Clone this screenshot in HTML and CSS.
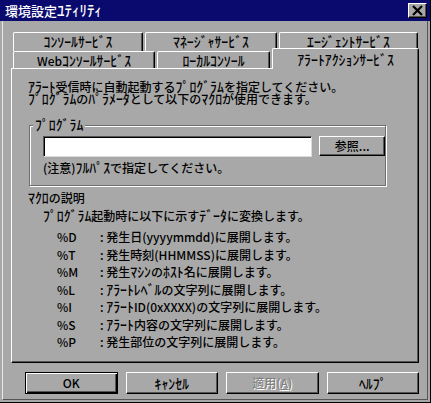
FILE: index.html
```html
<!DOCTYPE html>
<html lang="ja">
<head>
<meta charset="utf-8">
<link rel="stylesheet" href="styles.css">
</head>
<body>
<div class="window">
  <div class="titlebar">
    <span class="title">環境設定<span class="hk">ﾕﾃｨﾘﾃｨ</span></span>
    <span class="close"><svg width="13" height="11" viewBox="0 0 13 11"><path d="M2 1 L11 10 M11 1 L2 10" stroke="#000" stroke-width="2.2" fill="none"/></svg></span>
  </div>
  <div class="body">
    <div class="tabs">
      <div class="tabrow back">
        <div class="tab t1"><span class="hk">ｺﾝｿｰﾙｻｰﾋﾞｽ</span></div>
        <div class="tab t2"><span class="hk">ﾏﾈｰｼﾞｬｻｰﾋﾞｽ</span></div>
        <div class="tab t3"><span class="hk">ｴｰｼﾞｪﾝﾄｻｰﾋﾞｽ</span></div>
      </div>
      <div class="tabrow front">
        <div class="tab t4">Web<span class="hk">ｺﾝｿｰﾙｻｰﾋﾞｽ</span></div>
        <div class="tab t5"><span class="hk">ﾛｰｶﾙｺﾝｿｰﾙ</span></div>
        <div class="tab t6 active"><span class="hk">ｱﾗｰﾄｱｸｼｮﾝｻｰﾋﾞｽ</span></div>
      </div>
    </div>
    <div class="panel">
      <p class="intro"><span class="hk">ｱﾗｰﾄ</span>受信時に自動起動する<span class="hk">ﾌﾟﾛｸﾞﾗﾑ</span>を指定してください。<br><span class="hk">ﾌﾟﾛｸﾞﾗﾑ</span>の<span class="hk">ﾊﾟﾗﾒｰﾀ</span>として以下の<span class="hk">ﾏｸﾛ</span>が使用できます。</p>
      <fieldset class="group">
        <legend><span class="hk">ﾌﾟﾛｸﾞﾗﾑ</span></legend>
        <div class="pathrow">
          <input class="path" type="text">
          <button class="btn browse">参照...</button>
        </div>
        <p class="note">(注意)<span class="hk">ﾌﾙﾊﾟｽ</span>で指定してください。</p>
      </fieldset>
      <p class="head"><span class="hk">ﾏｸﾛ</span>の説明</p>
      <p class="sub"><span class="hk">ﾌﾟﾛｸﾞﾗﾑ</span>起動時に以下に示す<span class="hk">ﾃﾞｰﾀ</span>に変換します。</p>
      <dl class="macros">
        <div class="mrow"><dt>%D</dt><dd>: 発生日(yyyymmdd)に展開します。</dd></div>
        <div class="mrow"><dt>%T</dt><dd>: 発生時刻(HHMMSS)に展開します。</dd></div>
        <div class="mrow"><dt>%M</dt><dd>: 発生<span class="hk">ﾏｼﾝ</span>の<span class="hk">ﾎｽﾄ</span>名に展開します。</dd></div>
        <div class="mrow"><dt>%L</dt><dd>: <span class="hk">ｱﾗｰﾄﾚﾍﾞﾙ</span>の文字列に展開します。</dd></div>
        <div class="mrow"><dt>%I</dt><dd>: <span class="hk">ｱﾗｰﾄ</span>ID(0xXXXX)の文字列に展開します。</dd></div>
        <div class="mrow"><dt>%S</dt><dd>: <span class="hk">ｱﾗｰﾄ</span>内容の文字列に展開します。</dd></div>
        <div class="mrow"><dt>%P</dt><dd>: 発生部位の文字列に展開します。</dd></div>
      </dl>
    </div>
    <div class="buttons">
      <button class="btn big default">OK</button>
      <button class="btn big"><span class="hk">ｷｬﾝｾﾙ</span></button>
      <button class="btn big disabled">適用(<u>A</u>)</button>
      <button class="btn big"><span class="hk">ﾍﾙﾌﾟ</span></button>
    </div>
  </div>
</div>
</body>
</html>
```
FILE: styles.css
```css
* { box-sizing: border-box; }
html, body {
  margin: 0;
  padding: 0;
  background: #a8a8a8;
}
body {
  font-family: "Noto Sans CJK JP", "Noto Sans Mono CJK JP", sans-serif;
  font-size: 12px;
  font-weight: 500;
  line-height: 12px;
  color: #000;
}
p { margin: 0; }
.hk {
  font-size: 1.15em;
  line-height: 1px;
}
.window {
  width: 431px;
  height: 403px;
  display: flex;
  flex-direction: column;
  background: #a8a8a8;
  border-right: 1px solid #000;
  border-bottom: 1px solid #000;
}
.titlebar {
  height: 21px;
  flex: none;
  background: #0a0a6e;
  display: flex;
  align-items: center;
  justify-content: space-between;
  padding: 0 3px 0 5px;
}
.title {
  color: #fff;
  font-size: 13px;
  line-height: 13px;
}
.close {
  width: 19px;
  height: 15px;
  background: #a8a8a8;
  border-top: 1px solid #fff;
  border-left: 1px solid #fff;
  border-right: 1px solid #000;
  border-bottom: 1px solid #000;
  box-shadow: inset -1px -1px 0 #555;
  display: flex;
  align-items: center;
  justify-content: center;
}
.body {
  flex: 1;
  margin: 0 2px 2px 2px;
  border-left: 1px solid #e8e8e8;
  border-right: 1px solid #555;
  border-bottom: 1px solid #555;
  padding: 11px 8px 0 8px;
}
.tabs { padding-left: 2px; }
.tabrow {
  display: flex;
  gap: 2px;
}
.tabrow.back { height: 19px; }
.tabrow.front {
  height: 20px;
  margin-top: -3px;
  align-items: flex-start;
}
.tab {
  height: 19px;
  background: #a8a8a8;
  border-top: 1px solid #fff;
  border-left: 1px solid #fff;
  border-right: 1px solid #000;
  box-shadow: inset -1px 0 0 #555;
  border-top-left-radius: 2px;
  border-top-right-radius: 2px;
  display: flex;
  align-items: center;
  justify-content: center;
  padding-bottom: 1px;
}
.t1 { width: 130px; }
.t2 { width: 132px; }
.t3 { width: 139px; }
.tabrow.front .tab { margin-top: 3px; height: 17px; padding-bottom: 0; padding-top: 1px; }
.t4 { width: 142px; }
.t5 { width: 113px; }
.tabrow.front .t6.active {
  width: 147px;
  height: 21px;
  margin-top: 0;
  position: relative;
  z-index: 1;
  padding-top: 2px;
  padding-bottom: 2px;
}
.panel {
  height: 295px;
  border-top: 1px solid #fff;
  border-left: 1px solid #fff;
  border-right: 1px solid #000;
  border-bottom: 1px solid #000;
  box-shadow: inset -1px -1px 0 #555;
  padding: 12px 16px 0 16px;
}
.intro { line-height: 12px; }
.group {
  margin: 14px 16px 0 1px;
  padding: 0 0 11px 2px;
  border: 1px solid #6e6e6e;
  box-shadow: 1px 1px 0 #fff, inset 1px 1px 0 #fff;
  min-width: 0;
}
.group legend {
  padding: 0 2px;
  margin-left: 1px;
  line-height: 12px;
  background: #a8a8a8;
}
.pathrow {
  display: flex;
  gap: 7px;
  margin: 5px 0 0 11px;
  align-items: flex-start;
}
.path {
  width: 275px;
  height: 21px;
  margin: 0;
  background: #fff;
  border-top: 1px solid #555;
  border-left: 1px solid #555;
  border-right: 1px solid #dcdcdc;
  border-bottom: 1px solid #dcdcdc;
  box-shadow: inset 1px 1px 0 #000;
  outline: none;
}
.btn {
  font: inherit;
  color: #000;
  background: #a8a8a8;
  border-top: 1px solid #fff;
  border-left: 1px solid #fff;
  border-right: 1px solid #000;
  border-bottom: 1px solid #000;
  box-shadow: inset -1px -1px 0 #555;
  padding: 0;
  margin: 0;
  display: flex;
  align-items: center;
  justify-content: center;
}
.browse {
  width: 67px;
  height: 20px;
}
.note {
  margin: 5px 0 0 11px;
}
.head {
  margin-top: 6px;
}
.sub {
  margin: 6px 0 0 15px;
}
.macros {
  margin: 6px 0 0 29px;
  line-height: 17.5px;
}
.mrow { display: flex; }
.macros dt { width: 43px; }
.macros dd { margin: 0; }
.buttons {
  display: flex;
  gap: 8px;
  margin-top: 9px;
  padding-left: 14px;
}
.big {
  width: 93px;
  height: 22px;
}
.big.default {
  border: 1px solid #000;
  box-shadow: inset 1px 1px 0 #fff, inset -1px -1px 0 #000, inset -2px -2px 0 #555;
}
.big.disabled {
  color: #808080;
  text-shadow: 1px 1px 0 #fff;
}
```
